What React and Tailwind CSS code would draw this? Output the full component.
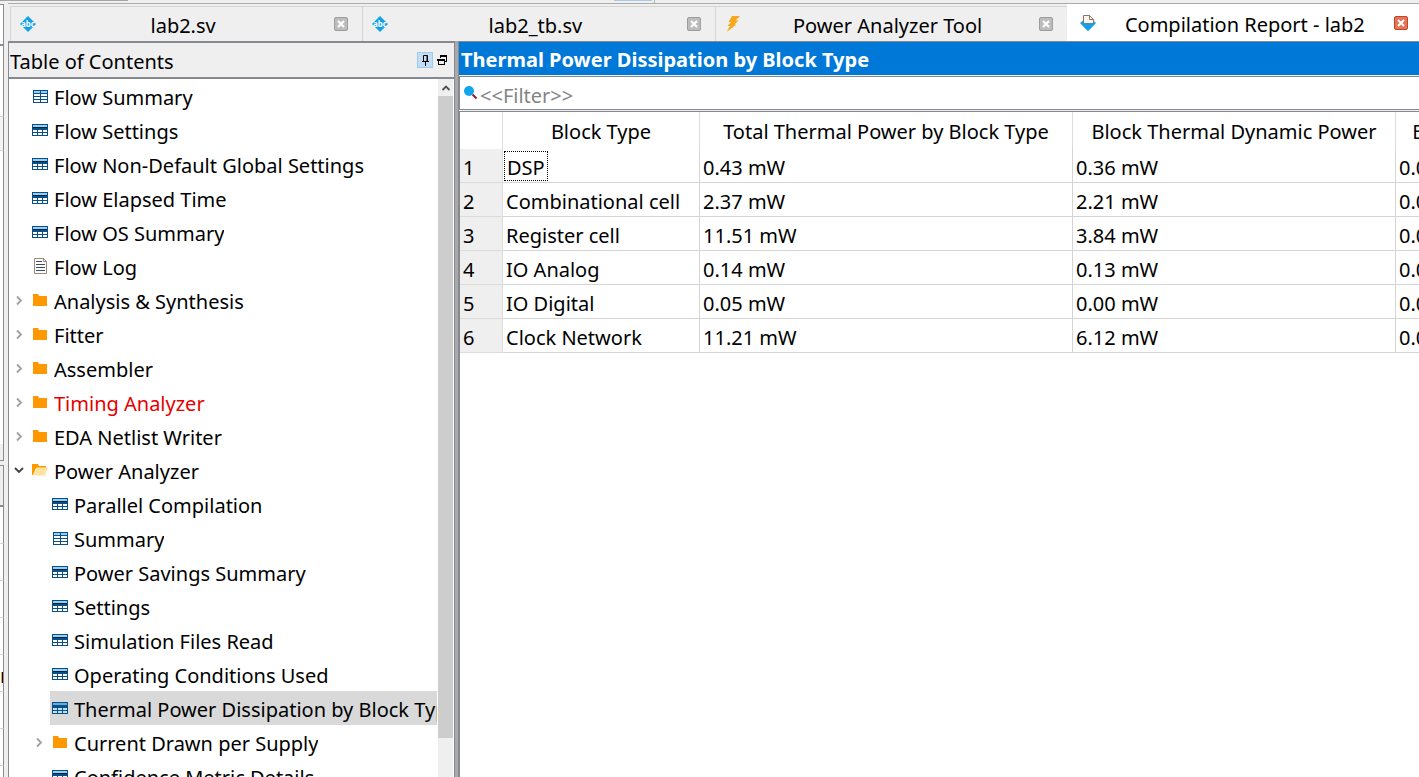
const tabs = [
  { label: 'lab2.sv', icon: 'abc' },
  { label: 'lab2_tb.sv', icon: 'abc' },
  { label: 'Power Analyzer Tool', icon: 'bolt' },
  { label: 'Compilation Report - lab2', icon: 'report', active: true },
];

const contents = [
  { label: 'Flow Summary', icon: 'grid' },
  { label: 'Flow Settings', icon: 'table' },
  { label: 'Flow Non-Default Global Settings', icon: 'table' },
  { label: 'Flow Elapsed Time', icon: 'table' },
  { label: 'Flow OS Summary', icon: 'table' },
  { label: 'Flow Log', icon: 'doc' },
  { label: 'Analysis & Synthesis', icon: 'folder', arrow: 'closed' },
  { label: 'Fitter', icon: 'folder', arrow: 'closed' },
  { label: 'Assembler', icon: 'folder', arrow: 'closed' },
  { label: 'Timing Analyzer', icon: 'folder', arrow: 'closed', alert: true },
  { label: 'EDA Netlist Writer', icon: 'folder', arrow: 'closed' },
  {
    label: 'Power Analyzer',
    icon: 'open',
    arrow: 'open',
    children: [
      { label: 'Parallel Compilation', icon: 'table' },
      { label: 'Summary', icon: 'grid' },
      { label: 'Power Savings Summary', icon: 'table' },
      { label: 'Settings', icon: 'table' },
      { label: 'Simulation Files Read', icon: 'table' },
      { label: 'Operating Conditions Used', icon: 'table' },
      { label: 'Thermal Power Dissipation by Block Type', icon: 'table', selected: true },
      { label: 'Current Drawn per Supply', icon: 'folder', arrow: 'closed' },
      { label: 'Confidence Metric Details', icon: 'table' },
    ],
  },
];

const columns = [
  'Block Type',
  'Total Thermal Power by Block Type',
  'Block Thermal Dynamic Power',
  'Block Thermal Static Power',
];

const rows = [
  ['DSP', '0.43 mW', '0.36 mW', '0.00 mW'],
  ['Combinational cell', '2.37 mW', '2.21 mW', '0.00 mW'],
  ['Register cell', '11.51 mW', '3.84 mW', '0.00 mW'],
  ['IO Analog', '0.14 mW', '0.13 mW', '0.00 mW'],
  ['IO Digital', '0.05 mW', '0.00 mW', '0.00 mW'],
  ['Clock Network', '11.21 mW', '6.12 mW', '0.00 mW'],
];

function TreeIcon({ name, selected }) {
  const cls = 'size-4 shrink-0';
  if (name === 'table') {
    return (
      <svg className={cls} viewBox="0 0 16 16" shapeRendering="crispEdges" aria-hidden="true">
        <rect x="0" y="2" width="16" height="12" fill="#0a4f86" />
        <rect x="1" y="3" width="14" height="2" fill={selected ? '#5fb0e0' : '#8fd0f5'} />
        <rect x="1" y="5" width="14" height="1" fill={selected ? '#0a4f86' : '#04203c'} />
        <g fill={selected ? '#bfe0f5' : '#ffffff'}>
          <rect x="1" y="8" width="4" height="2" />
          <rect x="6" y="8" width="4" height="2" />
          <rect x="11" y="8" width="4" height="2" />
          <rect x="1" y="11" width="4" height="2" />
          <rect x="6" y="11" width="4" height="2" />
          <rect x="11" y="11" width="4" height="2" />
        </g>
      </svg>
    );
  }
  if (name === 'grid') {
    return (
      <svg className={cls} viewBox="0 0 16 16" shapeRendering="crispEdges" aria-hidden="true">
        <rect x="1" y="2" width="15" height="13" fill="#0a4f86" />
        <rect x="2" y="3" width="6" height="2" fill="#8fd0f5" />
        <rect x="9" y="3" width="6" height="2" fill="#8fd0f5" />
        <g fill="#ffffff">
          <rect x="2" y="6" width="6" height="2" />
          <rect x="9" y="6" width="6" height="2" />
          <rect x="2" y="9" width="6" height="2" />
          <rect x="9" y="9" width="6" height="2" />
          <rect x="2" y="12" width="6" height="2" />
          <rect x="9" y="12" width="6" height="2" />
        </g>
      </svg>
    );
  }
  if (name === 'doc') {
    return (
      <svg className={cls} viewBox="0 0 16 16" aria-hidden="true">
        <path d="M2.5 0.5H11.5L14.5 3.5V15.5H2.5Z" fill="#fffdfa" stroke="#9a8878" />
        <path d="M11.5 0.5V3.5H14.5" fill="none" stroke="#9a8878" />
        <path d="M4 3.5H10M4 6.5H13M4 9.5H13M4 12.5H13" stroke="#33516e" />
      </svg>
    );
  }
  if (name === 'open') {
    return (
      <svg className={cls} viewBox="0 0 16 16" aria-hidden="true">
        <path d="M0 2H6L7 4H14V6H4L1 13H0Z" fill="#ff9800" />
        <path d="M4.5 5.500H16L13 13.500H1Z" fill="#ffe3a3" />
      </svg>
    );
  }
  return (
    <svg className={cls} viewBox="0 0 16 16" aria-hidden="true">
      <path d="M1 2H6L7 4H15V14H1Z" fill="#ff9800" />
    </svg>
  );
}

function Arrow({ state }) {
  return (
    <button
      type="button"
      aria-label={state === 'open' ? 'Collapse' : 'Expand'}
      className="flex h-8 w-3 items-center justify-center"
    >
      {state === 'open' ? (
        <svg className="size-3" viewBox="0 0 12 12" aria-hidden="true">
          <path d="M2 4L6 8L10 4" fill="none" stroke="#404040" strokeWidth="1.8" />
        </svg>
      ) : (
        <svg className="size-3" viewBox="0 0 12 12" aria-hidden="true">
          <path d="M4 2.5L8 6.5L4 10.5" fill="none" stroke="#a0a0a0" strokeWidth="1.8" />
        </svg>
      )}
    </button>
  );
}

function TreeItem({ item, nested }) {
  return (
    <li>
      <div className={nested ? 'flex h-[34px] pl-[23px]' : 'flex h-[34px] pl-[3px]'}>
        <div className="flex w-[18px] shrink-0 items-center pl-px">
          {item.arrow && <Arrow state={item.arrow} />}
        </div>
        <div
          className={
            item.selected
              ? 'flex min-w-0 flex-1 items-center gap-1.5 bg-[#d9d9d9] pl-0.5'
              : 'flex min-w-0 flex-1 items-center gap-1.5 pl-0.5'
          }
        >
          <TreeIcon name={item.icon} selected={item.selected} />
          <a
            href="#report"
            className={
              item.alert
                ? 'overflow-hidden pt-1 whitespace-nowrap text-[#e60000]'
                : 'overflow-hidden pt-1 whitespace-nowrap'
            }
          >
            {item.label}
          </a>
        </div>
      </div>
      {item.children && (
        <ul>
          {item.children.map((child) => (
            <TreeItem key={child.label} item={child} nested />
          ))}
        </ul>
      )}
    </li>
  );
}

function TabIcon({ name }) {
  if (name === 'abc') {
    return (
      <svg className="size-4 shrink-0" viewBox="0 0 16 16" aria-hidden="true">
        <path d="M8 0L16 8L8 16L0 8Z" fill="#12a0e8" />
        <text
          x="8"
          y="10.500"
          textAnchor="middle"
          fontSize="8"
          fontWeight="700"
          fill="#ffffff"
          className="font-['Noto_Sans',sans-serif]"
        >
          abc
        </text>
      </svg>
    );
  }
  if (name === 'bolt') {
    return (
      <svg className="size-4 shrink-0" viewBox="0 0 16 16" aria-hidden="true">
        <path d="M7 0H15L10.5 4.500H13.500L9.500 8.500H11.500L1.500 16L5 10H2.500L6 6H3.500Z" fill="#f5a81c" />
      </svg>
    );
  }
  return (
    <svg className="size-4 shrink-0" viewBox="0 0 16 16" aria-hidden="true">
      <path d="M0 8L3 5.500H13L16 8L8 16Z" fill="#12a0e8" />
      <path d="M3.5 8.500V0.500H9.500L13.500 4.500V8.500Z" fill="#fdf3ea" stroke="#8a7668" />
      <path d="M9.500 0.500V4.500H13.500" fill="none" stroke="#8a7668" />
      <path d="M1 8.500H15L8 16Z" fill="#12a0e8" />
    </svg>
  );
}

function CloseButton({ label, active }) {
  return (
    <button
      type="button"
      aria-label={`Close ${label}`}
      className={
        active
          ? 'flex size-3.5 shrink-0 items-center justify-center rounded-xs border border-[#c0452a] bg-[#e57355]'
          : 'flex size-3.5 shrink-0 items-center justify-center rounded-xs border border-[#9c9c9c] bg-[#bdbdbd]'
      }
    >
      <svg className="size-2" viewBox="0 0 8 8" aria-hidden="true">
        <path d="M1 1L7 7M7 1L1 7" stroke="#ffffff" strokeWidth="2" />
      </svg>
    </button>
  );
}

function TabBar() {
  return (
    <div
      role="tablist"
      className="grid h-[38px] shrink-0 grid-cols-4 border-t border-[#acacac] pl-0.5"
    >
      {tabs.map((tab) => (
        <div
          key={tab.label}
          className={
            tab.active
              ? 'flex items-center bg-white pr-[11px] pb-0.5 pl-[13px]'
              : 'mt-0.5 flex items-center border-t border-l border-[#d4d4d4] pr-3.5 pb-0.5 pl-[9px]'
          }
        >
          <TabIcon name={tab.icon} />
          <button
            type="button"
            role="tab"
            aria-selected={Boolean(tab.active)}
            className={
              tab.active
                ? 'min-w-0 flex-1 pt-1 whitespace-nowrap'
                : 'min-w-0 flex-1 pt-1 pr-1 whitespace-nowrap'
            }
          >
            {tab.label}
          </button>
          <CloseButton label={tab.label} active={tab.active} />
        </div>
      ))}
    </div>
  );
}

function ContentsPanel() {
  return (
    <section className="flex w-[447px] shrink-0 flex-col border-x border-t-2 border-[#868a90] bg-white">
      <header className="flex h-9 shrink-0 items-center justify-between border-b-2 border-[#868a90] bg-[#efefef] pr-1 pl-px">
        <h2 className="pt-1">Table of Contents</h2>
        <div className="flex items-center gap-px">
          <button
            type="button"
            aria-label="Pin panel"
            className="flex size-4 items-center justify-center border border-[#9ccbee] bg-[#c3def4]"
          >
            <svg className="size-3" viewBox="0 0 12 12" aria-hidden="true">
              <path d="M4.5 7.500V1.500H8.500V7.500M8 2V7M3 7.500H10M6.500 8V12" fill="none" stroke="#000000" />
            </svg>
          </button>
          <button type="button" aria-label="Float panel" className="flex size-4 items-center justify-center">
            <svg className="size-2.5" viewBox="0 0 10 10" shapeRendering="crispEdges" aria-hidden="true">
              <path d="M3 3V1H9V6H7" fill="none" stroke="#000000" />
              <path d="M3 1H10" stroke="#000000" strokeWidth="2" />
              <path d="M1 4V9H7V4" fill="none" stroke="#000000" />
              <path d="M0 5H7" stroke="#000000" strokeWidth="2" />
            </svg>
          </button>
        </div>
      </header>
      <div className="flex min-h-0 flex-1 pr-px">
        <nav aria-label="Table of Contents" className="min-w-0 flex-1 overflow-hidden">
          <ul>
            {contents.map((item) => (
              <TreeItem key={item.label} item={item} />
            ))}
          </ul>
        </nav>
        <div className="ml-px flex w-[15px] flex-col bg-[#efefef]">
          <button type="button" aria-label="Scroll up" className="flex h-[17px] items-center justify-center">
            <svg className="size-2.5" viewBox="0 0 10 10" aria-hidden="true">
              <path d="M1.5 7L5 3.500L8.500 7" fill="none" stroke="#505050" strokeWidth="1.8" />
            </svg>
          </button>
          <div className="h-[92%] bg-[#cdcdcd]" />
        </div>
      </div>
    </section>
  );
}

function ReportTable() {
  return (
    <table className="w-[1224px] table-fixed border-separate border-spacing-0 text-left leading-7">
      <colgroup>
        <col className="w-[43px]" />
        <col className="w-[197px]" />
        <col className="w-[373px]" />
        <col className="w-[323px]" />
        <col className="w-[288px]" />
      </colgroup>
      <thead>
        <tr className="h-[37px]">
          <td className="border-r border-[#dcdcdc]" />
          {columns.map((name) => (
            <th
              key={name}
              scope="col"
              className="border-r border-[#dcdcdc] p-0 pt-0.5 text-center font-normal whitespace-nowrap"
            >
              {name}
            </th>
          ))}
        </tr>
      </thead>
      <tbody>
        {rows.map((row, r) => (
          <tr key={row[0]} className="h-[34px]">
            <th scope="row" className="border-r border-b border-[#dcdcdc] bg-[#efefef] p-0 pt-1 pl-[3px] font-normal">
              {r + 1}
            </th>
            {row.map((value, c) =>
              r === 0 && c === 0 ? (
                <td key={columns[c]} className="border-r border-b border-[#d4d4d4] p-0 pl-px whitespace-nowrap">
                  <div className="w-fit border border-dotted border-black px-0.5 pt-1 leading-6">{value}</div>
                </td>
              ) : (
                <td key={columns[c]} className="border-r border-b border-[#d4d4d4] p-0 pt-1 pl-[3px] whitespace-nowrap">
                  {value}
                </td>
              ),
            )}
          </tr>
        ))}
      </tbody>
    </table>
  );
}

function ReportPanel() {
  return (
    <main className="flex min-w-0 flex-1 flex-col border-t border-[#868a90]">
      <h1 className="h-[33px] shrink-0 overflow-hidden bg-[#0078d7] pt-[3px] pl-0.5 font-bold whitespace-nowrap text-white">
        Thermal Power Dissipation by Block Type
      </h1>
      <label className="mt-px flex h-[34px] shrink-0 items-center border-y border-l border-[#868a90] bg-white pl-1">
        <svg className="size-4 shrink-0" viewBox="0 0 16 16" aria-hidden="true">
          <path d="M8.5 9.500L12.500 13.500" stroke="#9c1c1c" strokeWidth="2" />
          <circle cx="5" cy="6" r="5" fill="#12a5ee" />
        </svg>
        <input
          type="text"
          aria-label="Filter"
          placeholder="<<Filter>>"
          className="h-full min-w-0 flex-1 pt-1 outline-none placeholder:text-[#858585]"
        />
      </label>
      <div className="mt-px min-h-0 flex-1 overflow-hidden border-t border-l border-[#868a90] bg-white">
        <ReportTable />
      </div>
    </main>
  );
}

function ToolbarEdge() {
  return (
    <div className="flex h-[3px] shrink-0 items-start">
      <div className="h-px w-32 bg-[#a5a5a5]" />
      <div className="ml-[486px] h-px w-[38px] bg-[#a9c9e4]" />
      <div className="ml-0.5 h-full w-px bg-[#b4b4b4]" />
    </div>
  );
}

function EdgeStrip() {
  return (
    <aside className="flex w-1 shrink-0 flex-col overflow-hidden pt-px">
      <div className="h-[42px] shrink-0 border-t border-r border-b-2 border-[#8c8c8c] bg-white" />
      <div className="h-[71px] shrink-0 border-r border-b border-r-[#8c8c8c] border-b-[#d4d4d4] bg-white" />
      <div className="h-[34px] shrink-0 border-r border-b border-r-[#8c8c8c] border-b-[#d4d4d4] bg-[#f4f4f4]" />
      <div className="h-[293px] shrink-0 border-r border-[#8c8c8c] bg-white" />
      <div className="h-[17px] shrink-0 border-r border-b border-[#8c8c8c] bg-[#efefef]" />
      <div className="mt-1 h-[42px] shrink-0 border-t border-r border-b-2 border-[#8c8c8c] bg-[#efefef]" />
      {['', '', '', '', 'r', '', '', ''].map((text, i) => (
        <div
          key={i}
          className="h-[37px] shrink-0 overflow-hidden border-r border-b border-r-[#8c8c8c] border-b-[#d4d4d4] bg-white pt-1.5"
        >
          {text}
        </div>
      ))}
    </aside>
  );
}

export default function App() {
  return (
    <div className="flex h-screen flex-col overflow-hidden bg-[#efefef] font-['Noto_Sans',sans-serif] text-[20px] leading-[30px] text-black">
      <ToolbarEdge />
      <div className="flex min-h-0 flex-1">
        <EdgeStrip />
        <div className="ml-1 flex min-w-0 flex-1 flex-col">
          <TabBar />
          <div className="flex min-h-0 flex-1">
            <ContentsPanel />
            <div className="w-1 shrink-0 border-r border-[#868a90] bg-[#a9a9ab]" />
            <ReportPanel />
          </div>
        </div>
      </div>
    </div>
  );
}
